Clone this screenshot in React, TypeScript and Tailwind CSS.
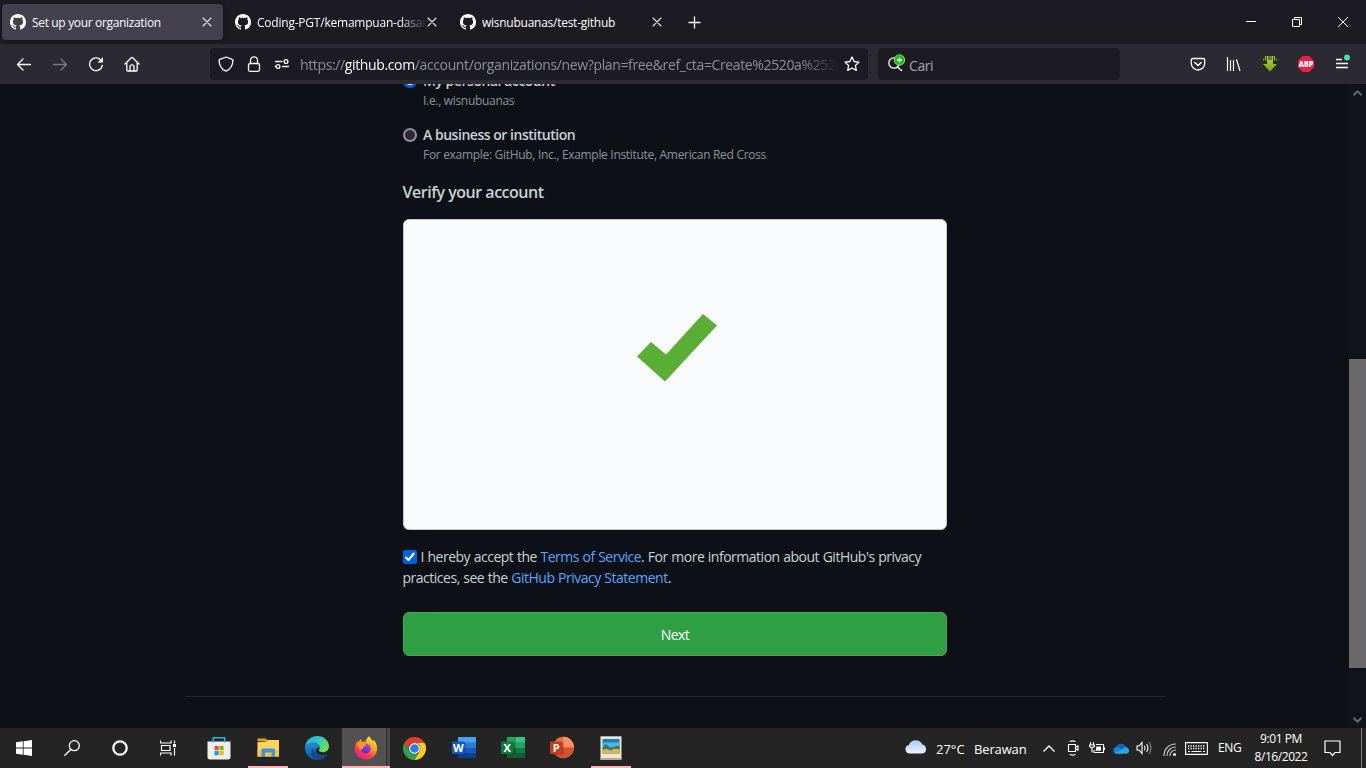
import React from "react";

type SvgProps = { w?: number; h?: number; box?: string; className?: string; children: React.ReactNode };

function Svg({ w = 16, h = 16, box, className = "", children }: SvgProps) {
  return (
    <svg
      width={w}
      height={h}
      viewBox={box ?? `0 0 ${w} ${h}`}
      fill="none"
      stroke="currentColor"
      strokeWidth={1.3}
      strokeLinecap="round"
      strokeLinejoin="round"
      className={`block shrink-0 ${className}`}
    >
      {children}
    </svg>
  );
}

function GithubMark() {
  return (
    <Svg className="text-white">
      <path
        stroke="none"
        fill="currentColor"
        d="M8 0C3.58 0 0 3.58 0 8c0 3.54 2.29 6.53 5.47 7.59.4.07.55-.17.55-.38 0-.19-.01-.82-.01-1.49-2.01.37-2.53-.49-2.69-.94-.09-.23-.48-.94-.82-1.13-.28-.15-.68-.52-.01-.53.63-.01 1.08.58 1.23.82.72 1.21 1.87.87 2.33.66.07-.52.28-.87.51-1.07-1.78-.2-3.64-.89-3.64-3.95 0-.87.31-1.59.82-2.15-.08-.2-.36-1.02.08-2.12 0 0 .67-.21 2.2.82.64-.18 1.32-.27 2-.27s1.36.09 2 .27c1.53-1.04 2.2-.82 2.2-.82.44 1.1.16 1.92.08 2.12.51.56.82 1.27.82 2.15 0 3.07-1.87 3.75-3.65 3.95.29.25.54.73.54 1.48 0 1.07-.01 1.93-.01 2.2 0 .21.15.46.55.38A8.01 8.01 0 0 0 16 8c0-4.42-3.58-8-8-8z"
      />
    </Svg>
  );
}

function Tab({ title, active, fade, spacing }: { title: string; active?: boolean; fade?: boolean; spacing: string }) {
  return (
    <div className={`flex h-9 w-[221px] items-center rounded pl-2 ${active ? "bg-[#42414d] shadow-[0_0_3px_rgba(0,0,0,0.5)]" : ""}`}>
      <GithubMark />
      <span
        className={`ml-1.5 mt-px w-[168px] overflow-hidden whitespace-nowrap text-[12px] text-[#fbfbfe] ${spacing} ${
          fade ? "[mask-image:linear-gradient(to_right,black_142px,transparent_170px)]" : ""
        }`}
      >
        {title}
      </span>
      <Svg w={10} h={10} className="ml-[2px] text-[#e4e4ea]">
        <path strokeWidth={1.1} d="M1 1l8 8M9 1l-8 8" />
      </Svg>
    </div>
  );
}

function ToolButton({ children, className = "" }: { children: React.ReactNode; className?: string }) {
  return <div className={`flex h-8 w-9 items-center justify-center text-[#fbfbfe] ${className}`}>{children}</div>;
}

function TabStrip() {
  return (
    <div className="flex h-11 items-start bg-[#1c1b22] pl-0.5 pt-1">
      <div className="flex gap-1">
        <Tab title="Set up your organization" active spacing="tracking-[-0.34px]" />
        <Tab title="Coding-PGT/kemampuan-dasar" fade spacing="tracking-[-0.22px]" />
        <Tab title="wisnubuanas/test-github" spacing="tracking-[-0.26px]" />
      </div>
      <div className="ml-[15px] flex h-9 items-center text-[#fbfbfe]">
        <Svg w={13} h={13}>
          <path d="M6.5 1v11M1 6.5h11" />
        </Svg>
      </div>
      <div className="ml-auto flex h-9 text-white">
        <div className="flex w-[46px] items-center justify-center">
          <Svg w={10} h={10}>
            <path strokeLinecap="butt" strokeWidth={1} d="M0 4.5h10" />
          </Svg>
        </div>
        <div className="flex w-[46px] items-center justify-center">
          <Svg w={10} h={10}>
            <path strokeLinecap="butt" strokeLinejoin="miter" strokeWidth={1} d="M.5 2.5h7v7h-7zM2.5 2.5v-2h7v7h-2" />
          </Svg>
        </div>
        <div className="flex w-[46px] items-center justify-center">
          <Svg w={10} h={10}>
            <path strokeWidth={1} d="M.3 .3l9.4 9.4M9.7 .3L.3 9.7" />
          </Svg>
        </div>
      </div>
    </div>
  );
}

function Toolbar() {
  return (
    <div className="flex h-10 items-center bg-[#2b2a33] pl-1.5">
      <ToolButton>
        <Svg><path d="M14.5 8.5h-13M7 3L1.5 8.5 7 14" /></Svg>
      </ToolButton>
      <ToolButton>
        <Svg><path stroke="#7b7a83" d="M1.5 8.5h13M9 3l5.5 5.500L9 14" /></Svg>
      </ToolButton>
      <ToolButton>
        <Svg>
          <path d="M14.300 9.500A6.400 6.400 0 1 1 12.800 4" />
          <path fill="currentColor" stroke="none" d="M15 1v5.500H9.500z" />
        </Svg>
      </ToolButton>
      <ToolButton>
        <Svg>
          <path d="M1 8l6.300-6.300a1 1 0 0 1 1.400 0L15 8M2.800 6.800v7.200c0 .6.400 1 1 1h8.400c.6 0 1-.4 1-1V6.800" />
          <path d="M6 15v-4.200a2 2 0 0 1 4 0V15" />
        </Svg>
      </ToolButton>

      <div className="ml-[60px] flex h-8 w-[658px] items-center rounded bg-[#1c1b22] pl-0.5 text-[#fbfbfe]">
        <div className="flex w-7 justify-center">
          <Svg><path d="M8 1l6.200 2.300c.5.200.7.500.7 1C14.800 9.500 12 13.500 8 15.200 4 13.500 1.200 9.500 1.100 4.300c0-.5.200-.8.700-1z" /></Svg>
        </div>
        <div className="flex w-7 justify-center">
          <Svg>
            <rect x="2.500" y="7.500" width="11" height="7.800" rx="1.500" />
            <path d="M4.500 7.500V4.300a3.500 3.500 0 0 1 7 0v3.200" />
          </Svg>
        </div>
        <div className="flex w-7 justify-center">
          <Svg>
            <path d="M1.500 5.500h6.500M8.500 10.500h6" />
            <circle cx="12" cy="5.500" r="1.900" />
            <circle cx="4" cy="10.500" r="1.900" />
            <path d="M1.300 10.500h.5" />
          </Svg>
        </div>
        <div className="ml-1 mt-px w-[538px] overflow-hidden whitespace-nowrap text-[14px] tracking-[-0.37px] text-[#8f8f98] [mask-image:linear-gradient(to_right,black_500px,transparent_538px)]">
          https://<span className="text-[#fbfbfe]">github.com</span>/account/organizations/new?plan=free&amp;ref_cta=Create%2520a%2520
        </div>
        <Svg className="ml-[6px]">
          <path d="M8 1l2.100 4.500 4.900.6-3.600 3.400.9 4.900L8 12l-4.300 2.400.9-4.900L1 6.100l4.900-.6z" />
        </Svg>
      </div>

      <div className="ml-2.5 flex h-8 w-[242px] items-center rounded bg-[#1c1b22] pl-[9px] text-[#fbfbfe]">
        <Svg w={18} h={18} className="mb-[3px]">
          <circle cx="7" cy="9" r="5.200" />
          <path strokeWidth="1.600" d="M10.500 13l4 3.500" />
          <circle cx="12.500" cy="6" r="5.300" fill="#14bd0a" stroke="#e9ffe9" strokeWidth=".6" />
          <path strokeLinecap="butt" d="M12.500 3.500v5M10 6h5" />
        </Svg>
        <span className="ml-1 mt-0.5 text-[14px] tracking-[-0.4px] text-[#a6a6af]">Cari</span>
      </div>

      <div className="ml-[60px] flex">
        <ToolButton>
          <Svg>
            <path d="M2.800 2.500h10.400c.8 0 1.500.6 1.500 1.400v3.400a6.700 6.700 0 0 1-13.400 0V3.900c0-.8.700-1.400 1.500-1.400z" />
            <path strokeWidth={1.500} d="M4.800 6.500L8 9.500l3.200-3" />
          </Svg>
        </ToolButton>
        <ToolButton>
          <Svg><path strokeLinecap="butt" strokeWidth={1.200} d="M1.500 1v14M4.500 4v11M7.500 4v11M10.500 3.500L14 15" /></Svg>
        </ToolButton>
        <ToolButton>
          <Svg>
            <defs><linearGradient id="arrow" x1="0" y1="0" x2="0" y2="1"><stop stopColor="#a4da34" /><stop offset="1" stopColor="#74a916" /></linearGradient></defs>
            <g stroke="none" fill="url(#arrow)">
              <path d="M5 0h1.500v4h1V0h1v4h1V0H11v8h4L8 15.500 1 8h4z" />
              <path d="M3 0h1.200v4.500H3zM11.800 0H13v4.500h-1.200zM1 2.800h1.300v1.700H1zM13.700 2.800H15v1.700h-1.300z" />
            </g>
          </Svg>
        </ToolButton>
        <ToolButton>
          <Svg>
            <path fill="#ed1e45" stroke="none" d="M4.700 0h6.600L16 4.700v6.600L11.300 16H4.700L0 11.300V4.700z" />
            <text x="8" y="10.900" fontSize="8" fontWeight="800" textAnchor="middle" fill="white" stroke="none" textLength="14.500" lengthAdjust="spacingAndGlyphs">ABP</text>
          </Svg>
        </ToolButton>
        <ToolButton>
          <Svg w={18} h={18} className="mb-1">
            <path strokeLinecap="butt" d="M3 6.500h6M3 10.500h12M3 14.500h12" />
            <circle cx="14" cy="4.500" r="3" fill="#3fe1b0" stroke="none" />
          </Svg>
        </ToolButton>
      </div>
    </div>
  );
}

function RadioOption({ label, hint, checked }: { label: string; hint: string; checked?: boolean }) {
  return (
    <div className="flex">
      <span
        className={`mt-1 size-3.5 shrink-0 rounded-full ${
          checked ? "border-[3px] border-[#0060df] bg-white" : "border-2 border-[#8f8f9d] bg-[#2b2a33]"
        }`}
      />
      <div className="ml-[6.500px] whitespace-nowrap">
        <div className="h-[21px] text-[14px] font-semibold leading-[21px] tracking-[-0.47px] text-[#c9d1d9]">{label}</div>
        <div className="h-[18px] pt-px text-[12px] leading-[18px] tracking-[-0.31px] text-[#8b949e]">{hint}</div>
      </div>
    </div>
  );
}

function Page() {
  return (
    <div className="flex h-[644px] overflow-hidden bg-[#0d1117] text-[#c9d1d9]">
      <main className="w-[1349px]">
        <div className="mx-auto -mt-[14px] w-[544px]">
          <div className="flex flex-col gap-[15px]">
            <RadioOption label="My personal account" hint="I.e., wisnubuanas" checked />
            <RadioOption label="A business or institution" hint="For example: GitHub, Inc., Example Institute, American Red Cross" />
          </div>
          <h2 className="mt-[17px] h-6 text-[16px] font-semibold leading-6 tracking-[-0.48px]">Verify your account</h2>
          <div className="mt-[15px] flex h-[311px] justify-center rounded-md border border-[#c4c6c9] bg-[#fafbfd] pt-[94px]">
            <Svg w={80} h={68} className="ml-1">
              <path stroke="none" fill="#5bae35" d="M0 42.500L14 28l15 12.500L66 0l14 11.500L28 67.500z" />
            </Svg>
          </div>
          <p className="mt-4 whitespace-nowrap text-[14px] leading-[21px] tracking-[-0.49px] [word-spacing:0.4px]">
            <span className="mr-1 inline-flex size-3.5 items-center justify-center rounded-[2px] bg-[#0060df] align-[0px] text-white">
              <Svg w={10} h={10}><path strokeWidth={2} d="M1 5.500l2.500 2.500L8.800 1.500" /></Svg>
            </span>
            I hereby accept the <span className="text-[#58a6ff]">Terms of Service</span>. For more information about GitHub's privacy
            <br />
            practices, see the <span className="text-[#58a6ff]">GitHub Privacy Statement</span>.
          </p>
          <button className="mt-6 flex h-11 w-full items-center justify-center rounded-md border border-[#46a857] bg-[#2ea043] pl-px text-[14px] tracking-[-0.5px] text-white">
            Next
          </button>
        </div>
        <div className="mx-auto mt-10 w-[980px] border-t border-[#21262d]" />
      </main>
      <div className="flex w-[17px] flex-col items-center bg-[#10131a] text-[#65676b]">
        <Svg w={9} h={6} className="mt-1.5"><path strokeWidth={2} strokeLinecap="butt" d="M.5 5.200l4-4 4 4" /></Svg>
        <div className="mt-[263px] h-[309px] w-[17px] bg-[#6a6a6c]" />
        <Svg w={9} h={6} className="mb-[5px] mt-auto"><path strokeWidth={2} strokeLinecap="butt" d="M.5 .8l4 4 4-4" /></Svg>
      </div>
    </div>
  );
}

function TaskItem({ children, open, active, wide }: { children: React.ReactNode; open?: boolean; active?: boolean; wide?: boolean }) {
  return (
    <div className={`flex h-10 flex-col items-center ${wide ? "w-12" : "w-[49px]"}`}>
      {active ? (
        <div className="flex h-[38px] w-12 bg-[#484848]">
          <div className="flex w-11 items-center justify-center bg-[#515151] pl-[5px] pt-0.5">{children}</div>
          <div className="w-px bg-[#2e2e2e]" />
        </div>
      ) : (
        <div className="flex h-[38px] items-center justify-center pt-0.5">{children}</div>
      )}
      <div className={`h-0.5 ${active ? "w-12 bg-[#ffb3b3]" : open ? "w-10 bg-[#ffb3b3]" : "w-10"}`} />
    </div>
  );
}

function OfficeLetter({ fill, children }: { fill: string; children: string }) {
  return (
    <>
      <rect x="1" y="6" width="12.500" height="12.500" rx="1" fill="#000" opacity=".25" stroke="none" />
      <rect x="0" y="5.500" width="12.500" height="12.500" rx="1" fill={fill} stroke="none" />
      <text x="6.200" y="15.700" fontSize="11" fontWeight="700" textAnchor="middle" fill="white" stroke="none">{children}</text>
    </>
  );
}

function Sheet({ colors }: { colors: [string, string, string, string] }) {
  return (
    <g stroke="none">
      <rect x="6" y="1" width="18" height="6" fill={colors[0]} />
      <rect x="6" y="6.500" width="18" height="5.500" fill={colors[1]} />
      <rect x="6" y="12" width="18" height="5" fill={colors[2]} />
      <rect x="6" y="17" width="18" height="5" fill={colors[3]} />
    </g>
  );
}

function TaskApps() {
  return (
    <div className="flex text-white">
      <TaskItem wide>
        <Svg><path stroke="none" fill="white" d="M0 2.300L6.800 1.300V7.600H0zM7.600 1.200L16 0v7.600H7.600zM0 8.400h6.800v6.300L0 13.700zM7.600 8.400H16V16L7.600 14.800z" /></Svg>
      </TaskItem>
      <TaskItem wide>
        <Svg><circle cx="10.300" cy="5.700" r="5" /><path d="M6.800 9.500L.8 15.300" /></Svg>
      </TaskItem>
      <TaskItem wide>
        <Svg><circle cx="8" cy="8" r="6.700" strokeWidth={2.200} /></Svg>
      </TaskItem>
      <TaskItem wide>
        <Svg>
          <path strokeLinecap="butt" strokeLinejoin="miter" strokeWidth={1.200} d="M.5 .5v2.500h10.500V.5M.5 15.500V13h10.500v2.500M1.500 5.500h8.500v5H1.500zM14.500 .5v3M14.500 8v7.500" />
          <rect x="13" y="4" width="3" height="3" fill="white" stroke="none" />
        </Svg>
      </TaskItem>
      <div className="w-0.5" />
      <TaskItem>
        <Svg w={24} h={24}>
          <path stroke="none" fill="#eeeeef" d="M.5 5.500h23V21a2.500 2.500 0 0 1-2.500 2.500H3A2.500 2.500 0 0 1 .5 21z" />
          <path stroke="#20b4ec" strokeWidth={1.600} strokeLinecap="butt" strokeLinejoin="miter" d="M6.300 6.500V1.800h11.400v4.700" />
          <g stroke="none">
            <rect x="7.500" y="10" width="4.200" height="4.200" fill="#f25022" />
            <rect x="12.500" y="10" width="4.200" height="4.200" fill="#7fba00" />
            <rect x="7.500" y="15" width="4.200" height="4.200" fill="#00a4ef" />
            <rect x="12.500" y="15" width="4.200" height="4.200" fill="#ffb900" />
          </g>
        </Svg>
      </TaskItem>
      <TaskItem open>
        <Svg w={24} h={24}>
          <g stroke="none">
            <path fill="#e8a00c" d="M1.500 2.500h8.500l1.500 2.500h-10z" />
            <path fill="#ffd55f" d="M1.500 6l8.500-.5 1.500-1.500h11.500V20.500H1.500z" />
            <path fill="#f7c443" d="M1.500 14h21.500v6.500H1.500z" />
            <path fill="#3d95dc" d="M5.500 21v-7.500c0-.6.400-1 1-1h11.500c.6 0 1 .4 1 1V21h-3.500v-4.500H9V21z" />
          </g>
        </Svg>
      </TaskItem>
      <TaskItem>
        <Svg w={24} h={24}>
          <defs>
            <linearGradient id="edgeTop" x1="0" y1="0" x2="1" y2=".5"><stop stopColor="#1ea6e8" /><stop offset=".55" stopColor="#36c6c4" /><stop offset="1" stopColor="#6be05b" /></linearGradient>
            <linearGradient id="edgeBody" x1="0" y1="0" x2="0" y2="1"><stop stopColor="#1d93d8" /><stop offset="1" stopColor="#0c50a0" /></linearGradient>
          </defs>
          <g stroke="none">
            <path fill="url(#edgeBody)" d="M0 12C0 8 4 5.500 8.500 6.200c3.500.5 6 2.800 6 5.300L12 18l10 .5C19.500 22 16 24 12 24 5.400 24 0 18.600 0 12z" />
            <path fill="#114a8b" d="M9 11.500c-1.500 3.500 1.500 7.500 6 7.900 2.500.2 4.500-.4 6.200-1.300.7-.3 1.100 0 .8.600C20 22 17 24 13.500 24 9 23.500 6 20 6.200 16.500c.2-2.300 1.300-4 2.800-5z" />
            <path fill="#242424" d="M14.700 11.500c0 1.500-.9 2.300-.9 2.900 0 .9 1.700 1.800 4.200 1.800 2.200 0 4-1 5-2.600-.1 2-.8 3.600-1.800 4.500-3.500 1.700-9 1.200-10.500-2-.9-2.400 1.500-5 4-4.600z" />
            <path fill="url(#edgeTop)" d="M0 11.500C.5 5 5.500 0 12 0c7 0 12 5 12 10.200 0 3.800-2.800 6-6 6-2.500 0-4.200-.8-4.200-1.600 0-.6.900-1 .9-2.800C14.700 8.500 11.500 6.500 8 6.500 4 6.500 .8 8.500 0 11.500z" />
          </g>
        </Svg>
      </TaskItem>
      <TaskItem open active>
        <Svg w={24} h={24}>
          <defs>
            <linearGradient id="foxBody" x1=".85" y1="0" x2=".2" y2="1"><stop stopColor="#fff04a" /><stop offset=".35" stopColor="#ffaa1e" /><stop offset=".68" stopColor="#ff3f4b" /><stop offset="1" stopColor="#e81698" /></linearGradient>
            <linearGradient id="foxGlobe" x1=".7" y1="0" x2=".3" y2="1"><stop stopColor="#a24bf0" /><stop offset="1" stopColor="#4d2cc2" /></linearGradient>
          </defs>
          <g stroke="none">
            <path fill="url(#foxBody)" d="M15.500 .3c.8 2.200 2.200 3.400 3.900 5.200.3-.7.300-1.300.2-2 2.300 2.700 3.700 6 3.500 9.500C22.800 19 18 23.500 12 23.500S.7 18.900 .7 12.800c0-3 1-5.800 3-8.300.2.800.4 1.300.8 1.800C5.300 5 6 3.500 7 3c0 1.200.6 2 1.300 2.800 1-.2 2.100-.2 3 .1C12 3.500 13.300 1.300 15.500 .3z" />
            <circle cx="11.800" cy="12.600" r="4.900" fill="url(#foxGlobe)" />
            <path fill="#ff9a21" d="M3.500 7.200c1.900-1 4.400-.9 5.700.3 1 .9 2.700.8 3.200 1.200-.3 1.300-2.500 1.600-3 2.200-.5.600.1 1.400-1 2-1 .5-2 0-2 1.200C5 12.500 3 10.500 3.500 7.200z" />
          </g>
        </Svg>
      </TaskItem>
      <TaskItem>
        <Svg w={23} h={23} box="0 0 24 24">
          <g stroke="none">
            <path fill="#e33b2e" d="M1.600 6A12 12 0 0 1 22.400 6H12a6 6 0 0 0-5.200 9z" />
            <path fill="#2da14c" d="M1.600 6A12 12 0 0 0 12 24l5.200-9A6 6 0 0 1 6.800 15z" />
            <path fill="#fcc91f" d="M22.400 6A12 12 0 0 1 12 24l5.200-9A6 6 0 0 0 12 6z" />
            <circle cx="12" cy="12" r="5.700" fill="white" />
            <circle cx="12" cy="12" r="4.500" fill="#2f7ced" />
          </g>
        </Svg>
      </TaskItem>
      <TaskItem>
        <Svg w={24} h={24}><Sheet colors={["#41a5ee", "#2b7cd3", "#185abd", "#103f91"]} /><OfficeLetter fill="#185abd">W</OfficeLetter></Svg>
      </TaskItem>
      <TaskItem>
        <Svg w={24} h={24}>
          <Sheet colors={["#21a366", "#159055", "#107c41", "#185c37"]} />
          <path fill="#33c481" stroke="none" d="M15 1h9v5.500h-9z" /><path fill="#21a366" stroke="none" d="M15 6.500h9V12h-9z" />
          <path fill="#185c37" stroke="none" d="M6 12h9v10H6z" />
          <OfficeLetter fill="#107c41">X</OfficeLetter>
        </Svg>
      </TaskItem>
      <TaskItem>
        <Svg w={24} h={24}>
          <g stroke="none">
            <circle cx="13.300" cy="11.500" r="10.700" fill="#ed6c47" />
            <path fill="#ff8f6b" d="M13.300 .8A10.700 10.700 0 0 1 24 11.500H13.300z" />
            <path fill="#d35230" d="M2.600 11.500H24a10.700 10.700 0 0 1-21.400 0z" />
          </g>
          <OfficeLetter fill="#c43e1c">P</OfficeLetter>
        </Svg>
      </TaskItem>
      <TaskItem open>
        <Svg w={24} h={24}>
          <g stroke="none">
            <rect x="1.500" y=".3" width="21" height="23.400" fill="#efe6d4" />
            <path fill="#b5a98f" d="M1.500 22h21v1.700h-21z" />
            <rect x="3.500" y="3" width="17" height="14.500" fill="#1680c4" />
            <path fill="#54b6df" d="M3.500 6.500h17V11h-17z" />
            <path fill="#e2b447" d="M3.500 14l4-1.500 4.500 2 4-2.500 4.500 1v4.500h-17z" />
            <path fill="#3d7650" d="M4 12l2-4 3 1.500 3 4.500-5-1zM13 12.500l3-2 4.500-1v3.500z" />
          </g>
        </Svg>
      </TaskItem>
    </div>
  );
}

function Tray() {
  return (
    <div className="ml-auto flex h-10 w-[461px] items-center text-[12px] text-white">
      <Svg w={22} h={15} className="mb-[3px]">
        <defs><linearGradient id="cloud" x1="0" y1="0" x2="0" y2="1"><stop stopColor="#a9c8f4" /><stop offset="1" stopColor="#edf3fd" /></linearGradient></defs>
        <path stroke="none" fill="url(#cloud)" d="M4.500 14.500a4.300 4.300 0 0 1-.6-8.500A7.300 7.300 0 0 1 17.300 5.500a4.600 4.600 0 0 1 .2 9z" />
      </Svg>
      <span className="ml-[9px] mt-[3px] w-[38px] whitespace-nowrap text-[13px]">27°C</span>
      <span className="mt-[3px] w-[53px] whitespace-nowrap text-[13px] tracking-[-0.15px]">Berawan</span>
      <div className="flex w-11 justify-center"><Svg w={12} h={7}><path strokeLinecap="butt" strokeWidth={1.400} d="M.5 6.500L6 1l5.500 5.500" /></Svg></div>
      <Svg w={12} h={16} className="-ml-1">
        <path strokeWidth={1.100} d="M3 1.500Q5.500 .3 8 1.500M3 14.500q2.500 1.200 5 0M1.500 4.500h7v7h-7zM8.500 7.200l2.500-1.500v4.600L8.500 8.800" />
      </Svg>
      <Svg w={16} h={12} className="ml-[10px]">
        <path strokeLinecap="butt" strokeLinejoin="miter" strokeWidth={1.100} d="M7 2.500h7.500v8H5V8M15.500 5v3" />
        <path fill="white" stroke="none" d="M7.500 4.500h4.500v4.200H6.500z" />
        <path strokeWidth={1.100} d="M1.500 .5v2M4.500 .5v2M.5 3h5v1.500L3 6 .5 4.500zM3 6v4" />
      </Svg>
      <Svg w={16} h={11} className="ml-2">
        <g stroke="none">
          <path fill="#0f65bd" d="M3 5A5.300 5.300 0 0 1 13 3.800L10 9z" />
          <path fill="#1684d8" d="M1 9.500C-.8 7 1 4 4 4c1.500 0 3 .8 4 2l2 4.500H3.500C2.500 10.500 1.600 10.200 1 9.500z" />
          <path fill="#27a8ea" d="M2 10.300L12 4.400c2.500-.6 4 1.200 4 3.100a3.200 3.200 0 0 1-3.200 3.200H3.700c-.6 0-1.200-.1-1.700-.4z" />
        </g>
      </Svg>
      <Svg w={17} h={14} className="ml-[7px]">
        <path strokeLinejoin="miter" strokeWidth={1.100} d="M1 5h2l3-3.500v11L3 9H1zM8.500 5.200q1.200 1.800 0 3.600M10.800 3.500q2.300 3.500 0 7" />
        <path stroke="#858585" strokeWidth={1.100} d="M13.200 1.500q3.600 5.500 0 11" />
      </Svg>
      <Svg w={14} h={14} className="ml-[10px] mt-1">
        <path stroke="#c9c9c9" strokeWidth={1.200} d="M1 12.500A11.500 11.500 0 0 1 12.500 1M4 12.500A8.500 8.500 0 0 1 12.500 4M7 12.500A5.500 5.500 0 0 1 12.500 7" />
        <circle cx="11.500" cy="11.500" r="1.500" stroke="none" fill="white" />
      </Svg>
      <Svg w={23} h={13} className="ml-2">
        <path strokeLinecap="butt" strokeLinejoin="miter" strokeWidth={1.100} d="M.6 .6h21.800v11.800H.6z" />
        <path strokeLinecap="butt" strokeDasharray="1.300 1.200" d="M3 4h17.500M3 6.500h17.500" />
        <path strokeLinecap="butt" strokeWidth={1.100} d="M3 9.500h2M6.500 9.500h10M18 9.500h2" />
      </Svg>
      <span className="ml-[10px] w-6 whitespace-nowrap tracking-[-0.3px]">ENG</span>
      <div className="ml-[9px] flex w-[60px] flex-col items-center whitespace-nowrap text-[12px] leading-[18px] tracking-[-0.43px]">
        <span>9:01 PM</span>
        <span>8/16/2022</span>
      </div>
      <Svg w={17} h={17} className="ml-[13px]"><path strokeLinejoin="miter" strokeWidth={1.200} d="M1 1h15v11.500H11L8.500 15.500 6 12.500H1z" /></Svg>
      <div className="ml-auto mr-1 h-10 w-px bg-[#7b7b7b]" />
    </div>
  );
}

export default function App() {
  return (
    <div className="h-[768px] w-[1366px] overflow-hidden bg-[#0d1117] font-['Open_Sans','Noto_Sans',sans-serif]">
      <TabStrip />
      <Toolbar />
      <Page />
      <div className="flex h-10 bg-[#242424]">
        <TaskApps />
        <Tray />
      </div>
    </div>
  );
}
